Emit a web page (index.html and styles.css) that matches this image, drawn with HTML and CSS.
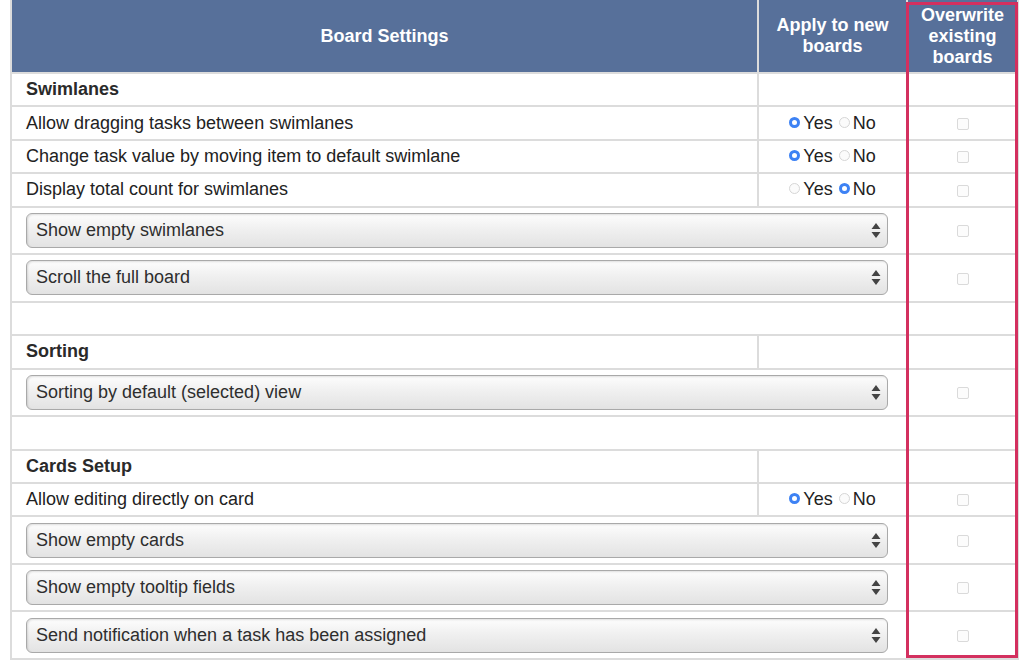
FILE: index.html
```html
<!DOCTYPE html>
<html>
<head>
<meta charset="utf-8">
<link rel="stylesheet" href="styles.css">
</head>
<body>
<div class="wrap">
  <table class="settings">
    <colgroup>
      <col class="c1"><col class="c2"><col class="c3">
    </colgroup>
    <thead>
      <tr>
        <th>Board Settings</th>
        <th>Apply to new<br>boards</th>
        <th>Overwrite<br>existing<br>boards</th>
      </tr>
    </thead>
    <tbody>
      <tr class="trow"><td class="section">Swimlanes</td><td></td><td></td></tr>
      <tr class="trow">
        <td>Allow dragging tasks between swimlanes</td>
        <td class="radios"><span class="radio on"></span>Yes <span class="radio"></span>No</td>
        <td class="chk"><span class="box"></span></td>
      </tr>
      <tr class="trow">
        <td>Change task value by moving item to default swimlane</td>
        <td class="radios"><span class="radio on"></span>Yes <span class="radio"></span>No</td>
        <td class="chk"><span class="box"></span></td>
      </tr>
      <tr class="trow">
        <td>Display total count for swimlanes</td>
        <td class="radios"><span class="radio"></span>Yes <span class="radio on"></span>No</td>
        <td class="chk"><span class="box"></span></td>
      </tr>
      <tr class="srow">
        <td colspan="2"><div class="select"><span>Show empty swimlanes</span><svg class="arrows" width="10" height="17" viewBox="0 0 10 17"><path d="M5 1 L9.5 7 H0.5 Z M5 16 L0.5 10 H9.5 Z" fill="#444"/></svg></div></td>
        <td class="chk"><span class="box"></span></td>
      </tr>
      <tr class="srow">
        <td colspan="2"><div class="select"><span>Scroll the full board</span><svg class="arrows" width="10" height="17" viewBox="0 0 10 17"><path d="M5 1 L9.5 7 H0.5 Z M5 16 L0.5 10 H9.5 Z" fill="#444"/></svg></div></td>
        <td class="chk"><span class="box"></span></td>
      </tr>
      <tr class="trow"><td colspan="2"></td><td></td></tr>
      <tr class="trow"><td class="section">Sorting</td><td></td><td></td></tr>
      <tr class="srow">
        <td colspan="2"><div class="select"><span>Sorting by default (selected) view</span><svg class="arrows" width="10" height="17" viewBox="0 0 10 17"><path d="M5 1 L9.5 7 H0.5 Z M5 16 L0.5 10 H9.5 Z" fill="#444"/></svg></div></td>
        <td class="chk"><span class="box"></span></td>
      </tr>
      <tr class="trow"><td colspan="2"></td><td></td></tr>
      <tr class="trow"><td class="section">Cards Setup</td><td></td><td></td></tr>
      <tr class="trow">
        <td>Allow editing directly on card</td>
        <td class="radios"><span class="radio on"></span>Yes <span class="radio"></span>No</td>
        <td class="chk"><span class="box"></span></td>
      </tr>
      <tr class="srow">
        <td colspan="2"><div class="select"><span>Show empty cards</span><svg class="arrows" width="10" height="17" viewBox="0 0 10 17"><path d="M5 1 L9.5 7 H0.5 Z M5 16 L0.5 10 H9.5 Z" fill="#444"/></svg></div></td>
        <td class="chk"><span class="box"></span></td>
      </tr>
      <tr class="srow">
        <td colspan="2"><div class="select"><span>Show empty tooltip fields</span><svg class="arrows" width="10" height="17" viewBox="0 0 10 17"><path d="M5 1 L9.5 7 H0.5 Z M5 16 L0.5 10 H9.5 Z" fill="#444"/></svg></div></td>
        <td class="chk"><span class="box"></span></td>
      </tr>
      <tr class="srow">
        <td colspan="2"><div class="select"><span>Send notification when a task has been assigned</span><svg class="arrows" width="10" height="17" viewBox="0 0 10 17"><path d="M5 1 L9.5 7 H0.5 Z M5 16 L0.5 10 H9.5 Z" fill="#444"/></svg></div></td>
        <td class="chk"><span class="box"></span></td>
      </tr>
    </tbody>
  </table>
  <div class="highlight"></div>
</div>
</body>
</html>
```
FILE: styles.css
```css
html, body {
  margin: 0;
  padding: 0;
  background: #ffffff;
}
body {
  font-family: "Liberation Sans", Arial, Helvetica, sans-serif;
  color: #222;
  font-size: 18px;
}
.wrap {
  position: relative;
  margin-left: 10px;
  width: 1007px;
}
.settings {
  border-collapse: collapse;
  table-layout: fixed;
  width: 1007px;
}
.c1 { width: 747px; }
.c2 { width: 149px; }
.c3 { width: 111px; }
.settings th {
  background: #57709a;
  color: #ffffff;
  font-weight: bold;
  font-size: 18px;
  line-height: 21px;
  height: 72px;
  padding: 0;
  border: 2px solid #dcdcdc;
  border-top: none;
  text-align: center;
  vertical-align: middle;
}
.settings th + th {
  border-left: 2px solid #c9d0db;
}
.settings td {
  border: 2px solid #dcdcdc;
  padding: 0 14px;
  vertical-align: middle;
  white-space: nowrap;
}
.trow td {
  height: 31.4px;
}
.srow td {
  height: 45.6px;
}
.section {
  font-weight: bold;
  color: #2a2a2a;
}
.radios {
  text-align: center;
  padding: 0 !important;
  color: #222;
}
.radio {
  display: inline-block;
  width: 11px;
  height: 11px;
  border-radius: 50%;
  border: 1px solid #d6d6d6;
  background: #fbfbfb;
  box-sizing: border-box;
  vertical-align: 1px;
  margin-right: 3px;
}
.radios .radio:nth-of-type(2) {
  margin-left: 1px;
}
.radio.on {
  border: 3.5px solid #3d82f4;
  background: #ffffff;
}
.chk {
  text-align: center;
  padding: 0 !important;
}
.box {
  display: inline-block;
  width: 12px;
  height: 12px;
  box-sizing: border-box;
  border: 1px solid #dadada;
  border-radius: 2px;
  background: #fcfcfc;
  vertical-align: middle;
}
.select {
  display: flex;
  align-items: center;
  justify-content: space-between;
  height: 35px;
  box-sizing: border-box;
  padding: 0 6px 0 9px;
  margin-right: 4px;
  border: 1px solid #a9a9a9;
  border-radius: 6px;
  background: linear-gradient(to bottom, #fdfdfd 0%, #f0f0f0 45%, #e3e3e3 100%);
  box-shadow: inset 1px 1px 2px rgba(0,0,0,0.12);
  color: #2e2e2e;
  font-size: 18px;
}
.arrows {
  display: block;
}
.highlight {
  position: absolute;
  top: 2px;
  right: -1px;
  width: 112px;
  height: 656px;
  box-sizing: border-box;
  border: 3px solid #d3305f;
  pointer-events: none;
}
```
